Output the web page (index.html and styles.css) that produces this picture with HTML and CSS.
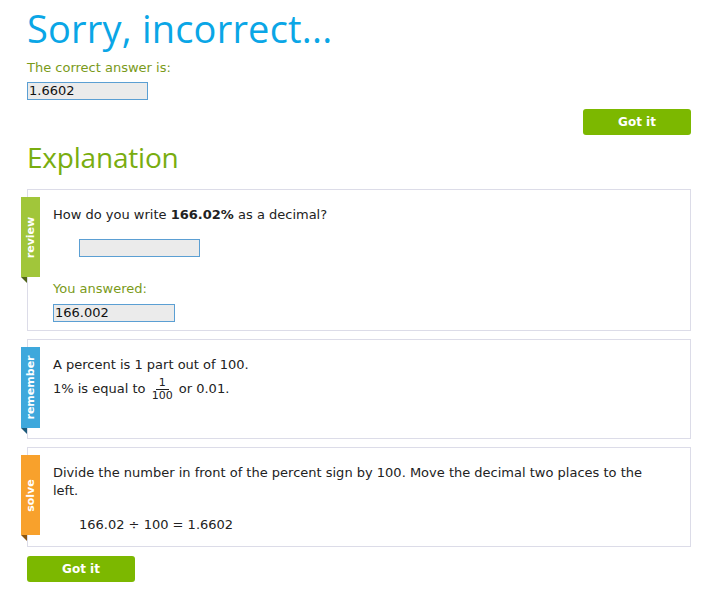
FILE: index.html
```html
<!DOCTYPE html>
<html>
<head>
<meta charset="utf-8">
<link rel="stylesheet" href="styles.css">
</head>
<body>
<div class="page">
  <h1 class="title">Sorry, incorrect...</h1>
  <div class="label">The correct answer is:</div>
  <div class="field field-answer">1.6602</div>
  <div class="top-actions"><button class="btn">Got it</button></div>
  <h2 class="expl">Explanation</h2>

  <div class="card">
    <div class="ribbon ribbon-review"><span>review</span></div>
    <div class="card-body">
      <p class="q">How do you write <b>166.02%</b> as a decimal?</p>
      <div class="field field-empty"></div>
      <div class="label label-you">You answered:</div>
      <div class="field field-you">166.002</div>
    </div>
  </div>

  <div class="card card-remember">
    <div class="ribbon ribbon-remember"><span>remember</span></div>
    <div class="card-body">
      <p class="line1">A percent is 1 part out of 100.</p>
      <p class="line2">1% is equal to <span class="frac"><span class="num">1</span><span class="den">100</span></span> or 0.01.</p>
    </div>
  </div>

  <div class="card card-solve">
    <div class="ribbon ribbon-solve"><span>solve</span></div>
    <div class="card-body">
      <p class="solve-text">Divide the number in front of the percent sign by 100. Move the decimal two places to the left.</p>
      <p class="eq">166.02 ÷ 100 = 1.6602</p>
    </div>
  </div>

  <div class="bottom-actions"><button class="btn">Got it</button></div>
</div>
</body>
</html>
```

FILE: styles.css
```css
html, body {
  margin: 0;
  padding: 0;
  background: #ffffff;
}
body {
  font-family: "DejaVu Sans", Verdana, sans-serif;
  font-size: 13px;
  color: #222;
}
.page {
  width: 664px;
  padding: 0 0 0 27px;
}
.title {
  margin: 0;
  padding-top: 5px;
  font-family: "Open Sans", "DejaVu Sans", sans-serif;
  font-weight: 400;
  font-size: 38px;
  line-height: 46px;
  color: #0aa6e6;
  letter-spacing: 0.2px;
}
.label {
  color: #7a9a1a;
  font-size: 13px;
  line-height: 16px;
}
.title + .label {
  margin-top: 9px;
}
.field {
  box-sizing: border-box;
  height: 18px;
  border: 1px solid #5b9fd3;
  background: #ebebeb;
  font-size: 13px;
  line-height: 16px;
  padding-left: 1px;
  color: #111;
}
.field-answer {
  width: 121px;
  margin-top: 6px;
}
.top-actions {
  display: flex;
  justify-content: flex-end;
  margin-top: 9px;
}
.btn {
  width: 108px;
  height: 26px;
  border: none;
  border-radius: 3px;
  background: #7cb800;
  color: #ffffff;
  font-family: "DejaVu Sans", Verdana, sans-serif;
  font-weight: bold;
  font-size: 12px;
  padding: 0;
}
.expl {
  margin: 0;
  margin-top: 5px;
  font-family: "Open Sans", "DejaVu Sans", sans-serif;
  font-weight: 400;
  font-size: 28px;
  line-height: 34px;
  color: #79ad0f;
  letter-spacing: -0.2px;
}
.card {
  position: relative;
  box-sizing: border-box;
  border: 1px solid #dcdce8;
  margin-top: 15px;
  height: 142px;
}
.card-remember {
  margin-top: 8px;
  height: 100px;
}
.card-solve {
  margin-top: 8px;
  height: 100px;
}
.ribbon {
  position: absolute;
  left: -7px;
  top: 7px;
  width: 19px;
  display: flex;
  align-items: center;
  justify-content: center;
}
.ribbon::after {
  content: "";
  position: absolute;
  left: 0;
  bottom: -6px;
  border-top: 6px solid #4a5a20;
  border-left: 6px solid transparent;
}
.ribbon span {
  transform: rotate(-90deg);
  color: #fff;
  font-weight: bold;
  font-size: 11px;
  white-space: nowrap;
}
.ribbon-review {
  height: 80px;
  background: #a1c63a;
}
.ribbon-review::after { border-top-color: #4f6418; }
.ribbon-remember {
  height: 81px;
  background: #3ea8dc;
}
.ribbon-remember::after { border-top-color: #1d5a7a; }
.ribbon-solve {
  height: 80px;
  background: #f8a12c;
}
.ribbon-solve::after { border-top-color: #8a5510; }
.card-body {
  padding: 16px 26px 0 25px;
}
.card-body p {
  margin: 0;
}
.q {
  line-height: 18px;
}
.field-empty {
  width: 121px;
  margin-left: 26px;
  margin-top: 15px;
}
.label-you {
  margin-top: 24px;
}
.field-you {
  width: 122px;
  margin-top: 7px;
}
.line1 {
  line-height: 18px;
}
.line2 {
  margin-top: 2px !important;
  line-height: 26px;
}
.frac {
  display: inline-flex;
  flex-direction: column;
  align-items: center;
  vertical-align: middle;
  font-size: 11px;
  line-height: 12px;
  margin: 0 2px;
}
.frac .num {
  border-bottom: 1px solid #222;
  padding: 0 3px;
}
.solve-text {
  line-height: 18px;
}
.eq {
  margin-top: 16px !important;
  margin-left: 26px !important;
  line-height: 18px;
}
.bottom-actions {
  display: flex;
  margin-top: 9px;
}
```
